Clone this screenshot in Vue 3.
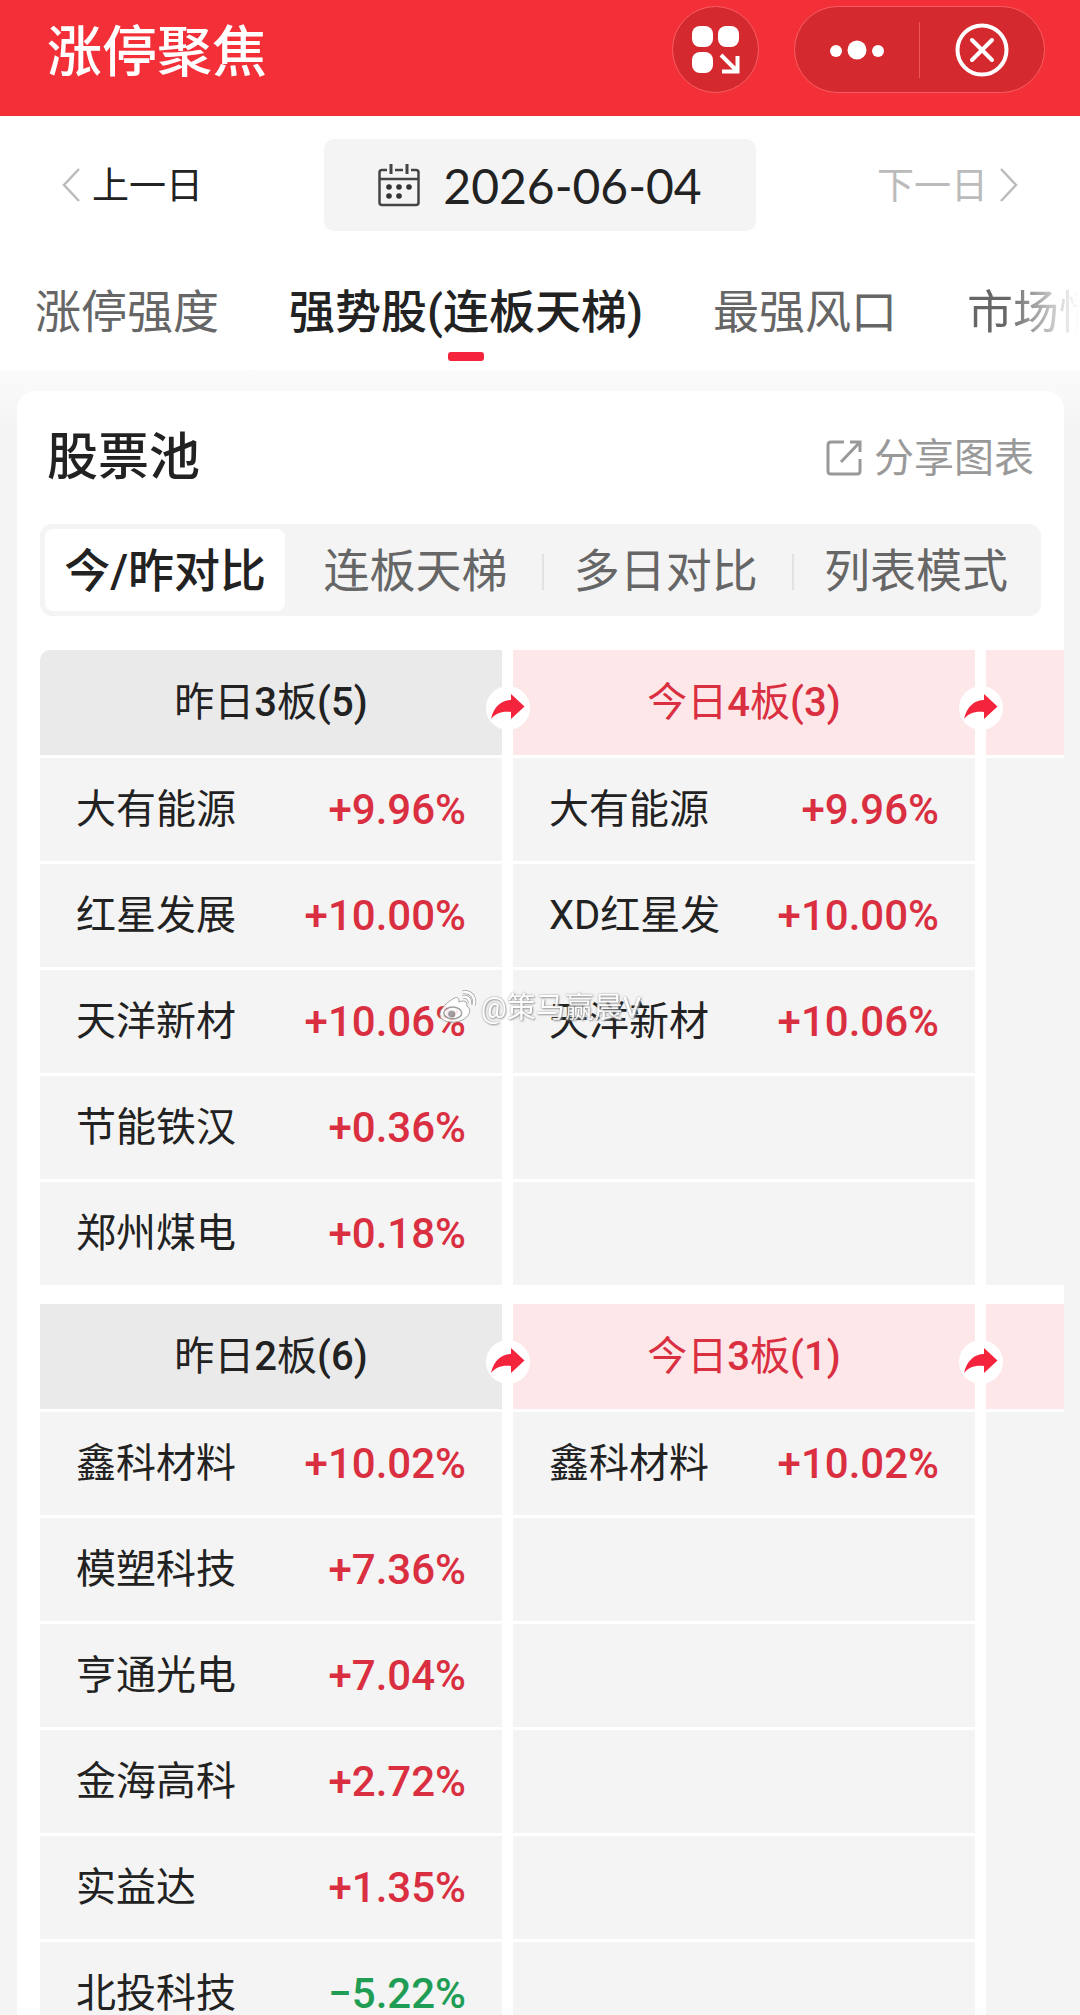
<script setup>
import { ref } from "vue";

const date = ref("2026-06-04");

const tabs = ["涨停强度", "强势股(连板天梯)", "最强风口", "市场情绪"];
const activeTab = ref(1);

const modes = ["今/昨对比", "连板天梯", "多日对比", "列表模式"];
const activeMode = ref(0);

const groups = ref([
  {
    left: { day: "昨日", level: 3, count: 5 },
    right: { day: "今日", level: 4, count: 3 },
    rows: [
      [{ name: "大有能源", pct: 9.96 }, { name: "大有能源", pct: 9.96 }],
      [{ name: "红星发展", pct: 10.0 }, { name: "XD红星发", pct: 10.0 }],
      [{ name: "天洋新材", pct: 10.06 }, { name: "天洋新材", pct: 10.06 }],
      [{ name: "节能铁汉", pct: 0.36 }, null],
      [{ name: "郑州煤电", pct: 0.18 }, null],
    ],
  },
  {
    left: { day: "昨日", level: 2, count: 6 },
    right: { day: "今日", level: 3, count: 1 },
    rows: [
      [{ name: "鑫科材料", pct: 10.02 }, { name: "鑫科材料", pct: 10.02 }],
      [{ name: "模塑科技", pct: 7.36 }, null],
      [{ name: "亨通光电", pct: 7.04 }, null],
      [{ name: "金海高科", pct: 2.72 }, null],
      [{ name: "实益达", pct: 1.35 }, null],
      [{ name: "北投科技", pct: -5.22 }, null],
    ],
  },
]);

const formatPct = (value) => {
  const sign = value < 0 ? "−" : "+";
  return sign + Math.abs(value).toFixed(2) + "%";
};

const shiftDay = (step) => {
  const d = new Date(date.value);
  d.setDate(d.getDate() + step);
  date.value = d.toISOString().slice(0, 10);
};
</script>

<template>
  <div class="page">
    <header class="topbar">
      <h1>涨停聚焦</h1>
      <button class="round-btn" aria-label="小程序">
        <svg width="48" height="48" viewBox="0 0 48 48" fill="#fff">
          <rect x="0" y="0" width="21" height="21" rx="8" />
          <rect x="26" y="0" width="21" height="21" rx="8" />
          <rect x="0" y="26" width="21" height="21" rx="8" />
          <path d="M29 29L44 44M30 45.500H45.500V30" fill="none" stroke="#fff" stroke-width="4" />
        </svg>
      </button>
      <div class="capsule">
        <button aria-label="更多">
          <svg width="56" height="20" viewBox="0 0 56 20" fill="#fff">
            <circle cx="7" cy="11" r="6" />
            <circle cx="28" cy="10" r="9.500" />
            <circle cx="49" cy="11" r="6" />
          </svg>
        </button>
        <button aria-label="关闭">
          <svg width="54" height="54" viewBox="0 0 54 54" fill="none" stroke="#fff">
            <circle cx="27" cy="27" r="24.500" stroke-width="4" />
            <path d="M17 17L37 37M37 17L17 37" stroke-width="4" stroke-linecap="round" />
          </svg>
        </button>
      </div>
    </header>

    <div class="date-row">
      <button class="day-btn" @click="shiftDay(-1)">
        <svg width="18" height="34" viewBox="0 0 18 34" fill="none" stroke="#bbb" stroke-width="2.500">
          <path d="M17 1L2 17L17 33" />
        </svg>
        <span>上一日</span>
      </button>
      <button class="date-btn">
        <svg width="42" height="44" viewBox="0 0 42 44" fill="none" stroke="#444" stroke-width="2.500">
          <path d="M9 7H4Q1.500 7 1.500 9.500V39.500Q1.500 42 4 42H38Q40.500 42 40.500 39.500V9.500Q40.500 7 38 7H33M17 7H25M1.500 16H40.500" />
          <path d="M13 1V11M29 1V11" stroke-width="3" />
          <g fill="#333" stroke="none">
            <circle cx="11" cy="24" r="2.800" />
            <circle cx="21" cy="24" r="2.800" />
            <circle cx="31" cy="24" r="2.800" />
            <circle cx="11" cy="33" r="2.800" />
            <circle cx="21" cy="33" r="2.800" />
          </g>
        </svg>
        {{ date }}
      </button>
      <button class="day-btn next" disabled>
        <span>下一日</span>
        <svg width="18" height="34" viewBox="0 0 18 34" fill="none" stroke="#bbb" stroke-width="2.500">
          <path d="M1 1L16 17L1 33" />
        </svg>
      </button>
    </div>

    <nav class="tabs">
      <button
        v-for="(tab, index) in tabs"
        :key="tab"
        :class="{ active: activeTab === index }"
        @click="activeTab = index"
      >
        {{ tab }}
      </button>
    </nav>

    <main class="content">
      <section class="card">
        <div class="card-head">
          <h2>股票池</h2>
          <button class="share">
            <svg width="36" height="36" viewBox="0 0 36 36" fill="none" stroke="#999" stroke-width="3">
              <path d="M18 2H5Q2 2 2 5V31Q2 34 5 34H31Q34 34 34 31V19" />
              <path d="M24 2H34V12M34 2L15 22" />
            </svg>
            <span>分享图表</span>
          </button>
        </div>

        <div class="modes">
          <button
            v-for="(mode, index) in modes"
            :key="mode"
            :class="{ active: activeMode === index }"
            @click="activeMode = index"
          >
            {{ mode }}
          </button>
        </div>

        <div class="board">
          <table v-for="(group, g) in groups" :key="g">
            <thead>
              <tr>
                <th class="yesterday">
                  {{ group.left.day }}<b>{{ group.left.level }}</b>板<b>({{ group.left.count }})</b>
                  <span class="arrow">
                    <svg width="44" height="44" viewBox="0 0 44 44" fill="#f5243d">
                      <path d="M5 33C8 20 16 14 25 14V8L38.500 20.500L25 33V26C16 25 10 27 5 33Z" />
                    </svg>
                  </span>
                </th>
                <th class="today">
                  {{ group.right.day }}<b>{{ group.right.level }}</b>板<b>({{ group.right.count }})</b>
                  <span class="arrow">
                    <svg width="44" height="44" viewBox="0 0 44 44" fill="#f5243d">
                      <path d="M5 33C8 20 16 14 25 14V8L38.500 20.500L25 33V26C16 25 10 27 5 33Z" />
                    </svg>
                  </span>
                </th>
                <th class="today"></th>
              </tr>
            </thead>
            <tbody>
              <tr v-for="(row, r) in group.rows" :key="r">
                <td v-for="(stock, c) in row" :key="c">
                  <div v-if="stock" class="stock">
                    <span class="name">{{ stock.name }}</span>
                    <span class="pct" :class="{ down: stock.pct < 0 }">{{ formatPct(stock.pct) }}</span>
                  </div>
                </td>
                <td v-if="r === 0" :rowspan="group.rows.length"></td>
              </tr>
            </tbody>
          </table>
        </div>
      </section>
    </main>

    <div class="watermark">
      <svg width="38" height="34" viewBox="0 0 38 34">
        <path
          d="M14 8C18 5 21 7 20 11C25 9 29 10 28 15C32 17 32 22 28 26C22 32 9 33 3 28C-2 23 4 14 14 8Z"
          fill="#fff"
          stroke="#999"
        />
        <ellipse cx="14" cy="22" rx="9" ry="6" fill="none" stroke="#999" stroke-width="1.500" />
        <circle cx="13" cy="23" r="3.500" fill="#999" />
        <path d="M24 6C29 5 32 9 31 13M24 1C32 0 37 6 35 14" fill="none" stroke="#999" stroke-width="4" />
        <path d="M24 6C29 5 32 9 31 13M24 1C32 0 37 6 35 14" fill="none" stroke="#fff" stroke-width="2.500" />
      </svg>
      <span>@策马赢晨V</span>
    </div>
  </div>
</template>

<style>
body {
  margin: 0;
  background: #f4f4f4;
}
</style>

<style scoped>
.page {
  position: relative;
  display: flex;
  flex-direction: column;
  height: 100vh;
  overflow: hidden;
  color: #222;
  font-family: Roboto, "Noto Sans CJK SC", sans-serif;
  background: #f4f4f4;
}

button {
  padding: 0;
  border: 0;
  background: none;
  color: inherit;
  font: inherit;
  white-space: nowrap;
  cursor: pointer;
}

svg {
  flex: none;
  overflow: visible;
}

h1,
h2 {
  margin: 0;
  font-weight: 500;
}

.topbar {
  display: flex;
  align-items: center;
  gap: 35px;
  padding: 6px 35px 23px 47px;
  background: #f32f38;
  color: #fff;
}

.topbar h1 {
  flex: 1;
  padding-top: 4px;
  font-size: 55px;
  line-height: 80px;
}

.round-btn,
.capsule {
  box-sizing: border-box;
  height: 87px;
  border: 1px solid #f95d63;
  border-radius: 44px;
  background: #d4292f;
}

.round-btn {
  display: grid;
  place-items: center;
  width: 87px;
}

.capsule {
  display: flex;
  align-items: center;
  width: 251px;
}

.capsule button {
  display: grid;
  flex: 1;
  place-items: center;
  height: 56px;
}

.capsule button + button {
  border-left: 1px solid #f0555b;
}

.date-row {
  display: grid;
  grid-template-columns: 1fr 40% 1fr;
  padding-top: 23px;
  background: #fff;
}

.day-btn {
  display: flex;
  align-items: center;
  gap: 12px;
  padding: 0 62px;
  font-size: 37px;
}

.day-btn.next {
  justify-content: flex-end;
  color: #bbb;
}

.day-btn span {
  padding-bottom: 4px;
}

.date-btn {
  display: flex;
  align-items: center;
  justify-content: center;
  gap: 23px;
  height: 92px;
  border-radius: 10px;
  background: #f4f4f4;
  font-family: Lato, sans-serif;
  font-size: 48px;
}

.tabs {
  display: flex;
  flex: none;
  gap: 70px;
  padding: 43px 0 0 35px;
  overflow: hidden;
  background: #fff;
}

.tabs button {
  position: relative;
  height: 96px;
  padding-bottom: 20px;
  color: #666;
  font-size: 46px;
  line-height: 76px;
}

.tabs .active {
  color: #222;
  font-weight: 500;
}

.tabs .active::after {
  content: "";
  position: absolute;
  bottom: 9px;
  left: 50%;
  width: 36px;
  height: 9px;
  margin-left: -18px;
  border-radius: 3px;
  background: #f5243d;
}

.tabs button:last-child {
  background: linear-gradient(90deg, #666 40px, #fff 112px);
  background-clip: text;
  color: transparent;
}

.content {
  flex: 1;
  min-height: 0;
  padding: 21px 16px 0 17px;
  overflow: hidden;
  background: linear-gradient(#fbfbfb, #f4f4f4 60px);
}

.card {
  border-radius: 18px;
  background: #fff;
}

.card-head {
  display: flex;
  align-items: center;
  justify-content: space-between;
  padding: 27px 30px 26px;
}

.card-head h2 {
  font-size: 51px;
  line-height: 80px;
}

.share {
  display: flex;
  align-items: center;
  gap: 12px;
  color: #999;
  font-size: 40px;
}

.share span {
  padding-bottom: 6px;
}

.modes {
  display: grid;
  grid-template-columns: repeat(4, 1fr);
  margin: 0 23px 34px;
  border-radius: 12px;
  background: #f4f4f4;
}

.modes button {
  position: relative;
  height: 82px;
  margin: 5px;
  padding-bottom: 6px;
  border-radius: 8px;
  color: #666;
  font-size: 46px;
}

.modes .active {
  background: #fff;
  color: #222;
  font-weight: 500;
}

.modes button:nth-child(n + 3)::before {
  content: "";
  position: absolute;
  top: 25px;
  left: -4px;
  width: 2px;
  height: 36px;
  background: #e2e2e2;
}

.board {
  padding-left: 23px;
  overflow: hidden;
}

table {
  width: 1430px;
  margin: -3px 0 13px -11px;
  table-layout: fixed;
  border-spacing: 11px 3px;
  font-size: 40px;
}

table + table {
  margin-top: 0;
}

th,
td {
  box-sizing: border-box;
  padding: 0;
  background: #f4f4f4;
}

th {
  position: relative;
  height: 105px;
  padding-bottom: 8px;
  font-weight: 400;
}

th b {
  font-weight: 500;
}

.yesterday {
  background: #eaeaea;
}

table:first-child .yesterday {
  border-top-left-radius: 10px;
}

.today {
  background: #fde7e9;
  color: #d92f40;
}

td {
  height: 103px;
}

.arrow {
  position: absolute;
  z-index: 1;
  top: 36px;
  right: -28px;
  width: 44px;
  height: 44px;
  border-radius: 50%;
  background: #fff;
}

.arrow svg {
  display: block;
}

.stock {
  display: flex;
  align-items: center;
  justify-content: space-between;
  padding: 0 36px;
}

.name {
  padding-bottom: 8px;
}

.pct {
  color: #d92f40;
  font-size: 42px;
  font-weight: 500;
}

.pct.down {
  color: #1f9d55;
}

.watermark {
  position: absolute;
  z-index: 2;
  top: 50%;
  left: 50%;
  display: flex;
  align-items: center;
  gap: 4px;
  transform: translate(-50%, -50%);
  color: #fff;
  font-size: 29px;
  line-height: 36px;
  white-space: nowrap;
  text-shadow: 0 0 2px #888, 1px 1px 2px #999;
  opacity: 0.9;
  pointer-events: none;
}
</style>
